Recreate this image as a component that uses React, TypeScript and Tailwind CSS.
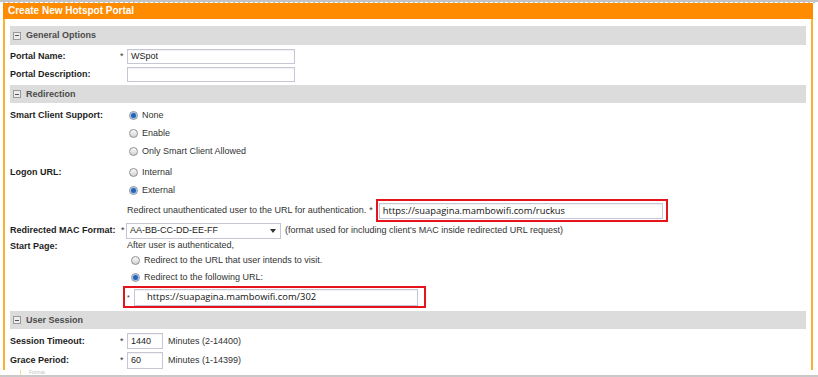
import React from "react";

const labelCls = "w-[110px] shrink-0 font-bold text-[#1d1d1d]";
const starCls = "w-[7px] shrink-0 text-[#333]";

function Radio({ checked }: { checked?: boolean }) {
  return (
    <span className="ml-[2px] mr-[4px] flex h-[9px] w-[9px] shrink-0 items-center justify-center rounded-full border border-[#8f8f8f] bg-linear-to-b from-[#fbfbfb] to-[#d2d2d2]">
      {checked && <span className="h-[5px] w-[5px] rounded-full bg-[#2b63b3] shadow-[0_0_0_1px_#9cc0ea]" />}
    </span>
  );
}

function Option({ text, checked, h = "h-[18px]" }: { text: string; checked?: boolean; h?: string }) {
  return (
    <div className={`flex items-center ${h}`}>
      <Radio checked={checked} />
      <span className="text-[#333]">{text}</span>
    </div>
  );
}

function SectionBar({ title, h }: { title: string; h: string }) {
  return (
    <div className={`flex items-center bg-[#dcdcdc] ${h}`}>
      <span className="ml-[3px] flex h-[8px] w-[8px] items-center justify-center border border-[#9a9a9a] bg-[#ececec]">
        <span className="h-px w-[4px] bg-[#555]" />
      </span>
      <span className="ml-[5px] font-bold text-[#4b4b4b]">{title}</span>
    </div>
  );
}

function TextBox({ value, w, h, url, pl = "pl-[3px]" }: { value?: string; w: string; h: string; url?: boolean; pl?: string }) {
  return (
    <div
      className={`flex items-center border border-[#c6c6d6] bg-white shadow-[inset_0_1px_1px_rgba(0,0,0,0.06)] ${w} ${h} ${pl} ${
        url ? "font-['Open_Sans',sans-serif] text-[9.4px] text-[#111]" : "text-[#222]"
      }`}
    >
      {value}
    </div>
  );
}

export default function App() {
  return (
    <div className="flex h-[377px] w-[818px] flex-col overflow-hidden bg-white font-['Liberation_Sans',Arial,sans-serif] text-[9px] leading-none">
      {/* top dotted edge */}
      <div className="h-[3px] shrink-0 border-b border-dashed border-white bg-[#c4c4c4]" />

      <div className="ml-[3px] flex h-[367px] w-[810px] shrink-0 flex-col">
        <div className="flex h-[16px] shrink-0 items-center bg-[#ff8c00] pl-[5px] text-[10px] font-bold text-white">
          Create New Hotspot Portal
        </div>

        <div className="flex flex-1 flex-col border-x-2 border-[#f9b233] px-[5px] pt-[7px]">
          <SectionBar title="General Options" h="h-[19px]" />

          <div className="mt-[4px] flex h-[15px] items-center">
            <span className={labelCls}>Portal Name:</span>
            <span className={starCls}>*</span>
            <TextBox value="WSpot" w="w-[168px]" h="h-[15px]" />
          </div>
          <div className="mt-[3px] flex h-[15px] items-center">
            <span className={labelCls}>Portal Description:</span>
            <span className={starCls} />
            <TextBox w="w-[168px]" h="h-[15px]" />
          </div>

          <div className="mt-[3px]">
            <SectionBar title="Redirection" h="h-[18px]" />
          </div>

          <div className="mt-[3px] flex">
            <span className={`${labelCls} flex h-[18px] items-center`}>Smart Client Support:</span>
            <span className={starCls} />
            <div>
              <Option text="None" checked />
              <Option text="Enable" />
              <Option text="Only Smart Client Allowed" />
            </div>
          </div>

          <div className="mt-[3px] flex">
            <span className={`${labelCls} flex h-[18px] items-center`}>Logon URL:</span>
            <span className={starCls} />
            <div>
              <Option text="Internal" />
              <Option text="External" checked />
            </div>
          </div>

          <div className="flex h-[23px] items-center">
            <span className="ml-[117px] text-[#333]">Redirect unauthenticated user to the URL for authentication.</span>
            <span className="ml-[3px] text-[#333]">*</span>
            <div className="ml-[3px] flex h-[23px] w-[292px] items-center border-2 border-[#e5141b] pl-px">
              <TextBox value="https://suapagina.mambowifi.com/ruckus" w="w-[284px]" h="h-[16px]" url />
            </div>
          </div>

          <div className="flex h-[17px] items-center">
            <span className="w-[111px] shrink-0 font-bold text-[#1d1d1d]">Redirected MAC Format:</span>
            <span className="w-[5px] shrink-0 text-[#333]">*</span>
            <div className="flex h-[16px] w-[155px] items-center justify-between border border-[#c6c6d6] bg-white pl-[3px] pr-[4px] text-[#222]">
              <span>AA-BB-CC-DD-EE-FF</span>
              <span className="h-0 w-0 border-x-[3px] border-t-[4px] border-x-transparent border-t-[#333]" />
            </div>
            <span className="ml-[4px] text-[#333]">(format used for including client's MAC inside redirected URL request)</span>
          </div>

          <div className="flex">
            <span className={`${labelCls} flex h-[14px] items-center pt-px`}>Start Page:</span>
            <span className={starCls} />
            <div>
              <div className="flex h-[13px] items-center text-[#333]">After user is authenticated,</div>
              <div className="ml-[2px]">
                <Option text="Redirect to the URL that user intends to visit." h="h-[17px]" />
                <Option text="Redirect to the following URL:" checked h="h-[17px]" />
              </div>
              <div className="ml-[-4px] flex h-[22px] w-[303px] items-center border-2 border-[#e5141b]">
                <span className="w-[9px] pl-[2px] text-[7px] text-[#333]">*</span>
                <TextBox value="https://suapagina.mambowifi.com/302" w="w-[284px]" h="h-[17px]" url pl="pl-[12px]" />
              </div>
            </div>
          </div>

          <div className="mt-[3px]">
            <SectionBar title="User Session" h="h-[18px]" />
          </div>

          <div className="mt-[4px] flex h-[16px] items-center">
            <span className={labelCls}>Session Timeout:</span>
            <span className={starCls}>*</span>
            <TextBox value="1440" w="w-[36px]" h="h-[16px]" />
            <span className="ml-[5px] text-[#333]">Minutes (2-14400)</span>
          </div>
          <div className="mt-[3px] flex h-[17px] items-center">
            <span className={labelCls}>Grace Period:</span>
            <span className={starCls}>*</span>
            <TextBox value="60" w="w-[36px]" h="h-[17px]" />
            <span className="ml-[5px] text-[#333]">Minutes (1-14399)</span>
          </div>
        </div>
      </div>

      {/* start of the next row, mostly out of view */}
      <div className="flex h-[5px] shrink-0 items-center">
        <span className="ml-[20px] h-[5px] w-px bg-[#f6d9a4]" />
        <span className="ml-[8px] text-[5px] leading-[5px] text-[#c4c4c4]">Format</span>
      </div>
      <div className="h-[2px] shrink-0 bg-[#c9c9c9]" />
    </div>
  );
}
